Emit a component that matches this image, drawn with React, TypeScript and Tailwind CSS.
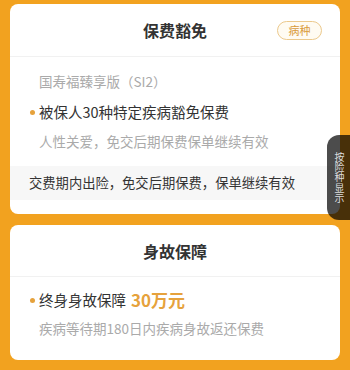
const font = "font-['Noto_Sans_CJK_SC','Noto_Sans',sans-serif]";

function Dot() {
  return <span className="mr-[4px] inline-block h-[5px] w-[5px] shrink-0 rounded-full bg-[#e6a23c]" />;
}

export default function App() {
  return (
    <div className={`relative h-[370px] w-[350px] overflow-hidden bg-[#f2a21f] pt-[4px] ${font}`}>
      {/* 保费豁免 */}
      <div className="mx-[10px] overflow-hidden rounded-[8px] bg-white">
        <div className="relative flex h-[53px] items-center justify-center border-b border-[#f1f1f1]">
          <span className="text-[16px] font-bold text-[#333]">保费豁免</span>
          <span className="absolute right-[18px] top-[17px] flex h-[19px] w-[45px] items-center justify-center rounded-full border border-[#ecc98c] bg-[#fffbf2] text-[11px] leading-none text-[#d99a3a]">
            病种
          </span>
        </div>
        <div className="pt-[14px] pb-[14px]">
          <div className="pl-[29px] text-[13.5px] leading-[20px] text-[#aaa]">国寿福臻享版（SI2）</div>
          <div className="mt-[10px] flex items-center pl-[20px] text-[14.5px] leading-[22px] text-[#333]">
            <Dot />
            被保人30种特定疾病豁免保费
          </div>
          <div className="mt-[8px] pl-[29px] text-[13.5px] leading-[20px] text-[#aaa]">
            人性关爱，免交后期保费保单继续有效
          </div>
          <div className="mt-[15px] flex h-[34px] items-center bg-[#f7f7f7] pl-[19px] text-[13.3px] text-[#333]">
            交费期内出险，免交后期保费，保单继续有效
          </div>
        </div>
      </div>

      {/* 身故保障 */}
      <div className="mx-[10px] mt-[11px] overflow-hidden rounded-[8px] bg-white">
        <div className="flex h-[52px] items-center justify-center border-b border-[#f1f1f1]">
          <span className="text-[16px] font-bold text-[#333]">身故保障</span>
        </div>
        <div className="pt-[12px] pb-[22px]">
          <div className="flex items-center pl-[20px] text-[14.5px] leading-[22px] text-[#333]">
            <Dot />
            终身身故保障
            <span className="ml-[5px] text-[17px] font-bold text-[#e6a23c]">30万元</span>
          </div>
          <div className="mt-[7px] pl-[29px] text-[13.5px] leading-[20px] text-[#aaa]">
            疾病等待期180日内疾病身故返还保费
          </div>
        </div>
      </div>

      {/* 侧边按钮 */}
      <div className="absolute right-0 top-[135px] flex h-[85px] w-[23px] items-center justify-center rounded-l-[12px] bg-black/70 pl-[1px]">
        <span className="text-[10px] leading-[14px] tracking-[0.3px] text-[#ddd] [writing-mode:vertical-rl]">
          按险种显示
        </span>
      </div>
    </div>
  );
}
